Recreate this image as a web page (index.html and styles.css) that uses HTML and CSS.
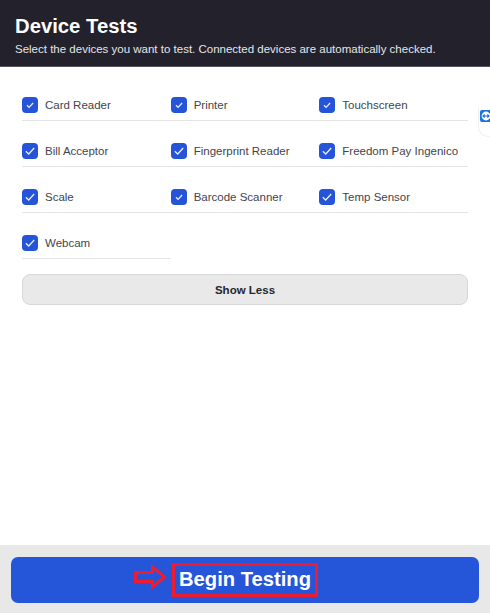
FILE: index.html
```html
<!DOCTYPE html>
<html lang="en">
<head>
    <meta charset="UTF-8">
    <meta name="viewport" content="width=device-width, initial-scale=1.0">
    <title>Device Tests</title>
    <link rel="stylesheet" href="styles.css">
</head>
<body>

    <div class="page">
        <div class="header">
            <h1>Device Tests</h1>
            <p>Select the devices you want to test. Connected devices are automatically checked.</p>
        </div>

        <div class="content">
            <div class="device-grid">
                <label class="device"><span class="check"><svg viewBox="0 0 16 16"><path d="M5 8.300l2.100 2.100 4-4.400"/></svg></span>Card Reader</label>
                <label class="device"><span class="check"><svg viewBox="0 0 16 16"><path d="M5 8.300l2.100 2.100 4-4.400"/></svg></span>Printer</label>
                <label class="device"><span class="check"><svg viewBox="0 0 16 16"><path d="M5 8.300l2.100 2.100 4-4.400"/></svg></span>Touchscreen</label>
                <label class="device"><span class="check"><svg viewBox="0 0 16 16"><path d="M3.800 8.300l2.900 2.700 5.500-6"/></svg></span>Bill Acceptor</label>
                <label class="device"><span class="check"><svg viewBox="0 0 16 16"><path d="M3.800 8.300l2.900 2.700 5.500-6"/></svg></span>Fingerprint Reader</label>
                <label class="device"><span class="check"><svg viewBox="0 0 16 16"><path d="M3.800 8.300l2.900 2.700 5.500-6"/></svg></span>Freedom Pay Ingenico</label>
                <label class="device"><span class="check"><svg viewBox="0 0 16 16"><path d="M3.800 8.300l2.900 2.700 5.500-6"/></svg></span>Scale</label>
                <label class="device"><span class="check"><svg viewBox="0 0 16 16"><path d="M5 8.300l2.100 2.100 4-4.400"/></svg></span>Barcode Scanner</label>
                <label class="device"><span class="check"><svg viewBox="0 0 16 16"><path d="M3.800 8.300l2.900 2.700 5.500-6"/></svg></span>Temp Sensor</label>
                <label class="device"><span class="check"><svg viewBox="0 0 16 16"><path d="M3.800 8.300l2.900 2.700 5.500-6"/></svg></span>Webcam</label>
            </div>
            <button class="show-less">Show Less</button>
        </div>

        <div class="footer">
            <button class="begin">
                <span class="begin-label">
                    <svg class="arrow" viewBox="0 0 33 24"><path d="M1.500 7.500h17V2l12 10-12 10v-5.500h-17z"/></svg>
                    Begin Testing
                </span>
            </button>
        </div>

        <!-- remote support tab stuck on the screen edge -->
        <div class="remote-tab">
            <svg viewBox="0 0 11 12"><rect width="12" height="12" rx="2" fill="#1a73e0"/><circle cx="6" cy="6" r="4.400" fill="#fff"/><path d="M3 6h6M2.700 6l1.500-1.500v3zM9.300 6L7.800 4.500v3z" fill="#1a73e0" stroke="#1a73e0"/></svg>
        </div>
    </div>

</body>
</html>
```

FILE: styles.css
```css
* {
    box-sizing: border-box;
}
body {
    margin: 0;
    font-family: "Liberation Sans", Arial, sans-serif;
    background-color: white;
}
.page {
    position: relative;
    display: flex;
    flex-direction: column;
    height: 614px;
    overflow: hidden;
}
.header {
    height: 67px;
    padding: 15px 15px 0;
    background-color: #22212c;
    border-bottom: 1px solid #55555c;
    color: white;
}
.header h1 {
    margin: 0;
    font-size: 20.300px;
    line-height: 23px;
    font-weight: bold;
}
.header p {
    margin: 4px 0 0;
    font-size: 11.500px;
    line-height: 14px;
    color: #e6e6e8;
}
.content {
    flex: 1;
    padding: 23px 22px 0;
}
.device-grid {
    display: grid;
    grid-template-columns: repeat(3, 1fr);
    grid-auto-rows: 31px;
    row-gap: 15px;
}
.device {
    display: flex;
    align-items: center;
    gap: 7px;
    height: 31px;
    padding-bottom: 1px;
    border-bottom: 1px solid #e4e4e4;
    font-size: 11.500px;
    color: #44444c;
}
.check {
    width: 16px;
    height: 16px;
    border-radius: 4px;
    background-color: #2554d8;
}
.check svg {
    display: block;
    width: 16px;
    height: 16px;
    fill: none;
    stroke: #e8eefc;
    stroke-width: 1.300;
}
.show-less {
    display: block;
    width: 446px;
    height: 31px;
    margin-top: 15px;
    background-color: #e9e9e9;
    border: 1px solid #d8d8d8;
    border-radius: 8px;
    font-family: inherit;
    font-size: 11.500px;
    font-weight: bold;
    color: #26262e;
}
.footer {
    height: 68px;
    margin-bottom: 1px;
    padding: 12px 11px 0;
    background-color: #e8e8e8;
}
.begin {
    display: flex;
    justify-content: center;
    align-items: center;
    width: 468px;
    height: 46px;
    padding: 0;
    background-color: #2555d9;
    border: none;
    border-radius: 7px;
    font-family: inherit;
}
.begin-label {
    position: relative;
    width: 146px;
    height: 34px;
    border: 3px solid #ed1c2e;
    font-size: 20.200px;
    font-weight: bold;
    line-height: 26px;
    color: white;
    text-align: center;
}
.arrow {
    position: absolute;
    left: -41px;
    top: -1px;
    width: 33px;
    height: 24px;
    fill: none;
    stroke: #ed1c2e;
    stroke-width: 3;
}
.remote-tab {
    position: absolute;
    top: 107px;
    left: 478px;
    width: 20px;
    height: 30px;
    padding: 3px 0 0 1px;
    background-color: white;
    border-left: 1px solid #efeff2;
    border-bottom: 1px solid #efeff2;
    border-radius: 0 0 0 10px;
}
.remote-tab svg {
    display: block;
    width: 11px;
    height: 12px;
}
```
